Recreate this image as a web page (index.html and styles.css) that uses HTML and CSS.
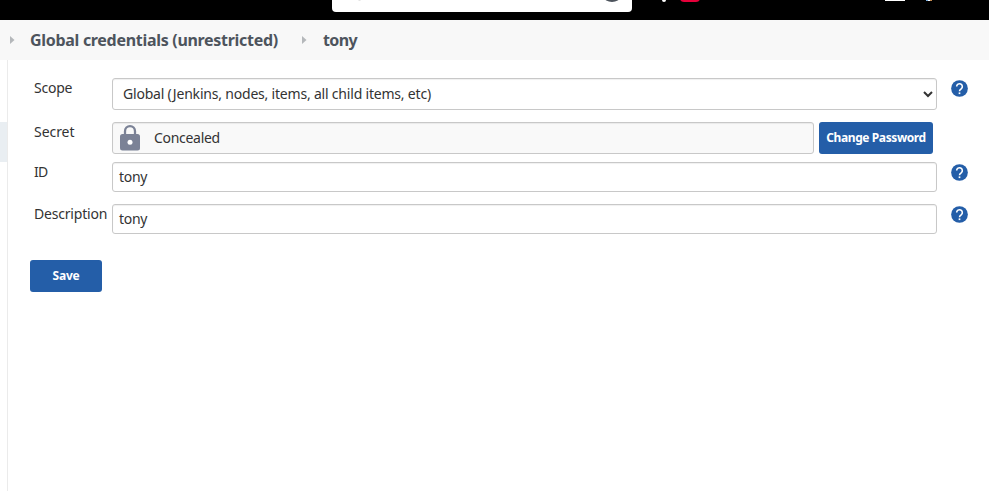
FILE: index.html
```html
<!DOCTYPE html>
<html lang="en">
<head>
<meta charset="utf-8">
<title>Update credentials</title>
<link rel="stylesheet" href="styles.css">
</head>
<body>
<svg class="defs" aria-hidden="true">
  <symbol id="help" viewBox="0 0 24 24"><circle cx="12" cy="12" r="11.8"/><path d="M8 9.2a4 4 0 1 1 6.7 3c-1.5 1.3-2.7 1.8-2.7 3.8" fill="none" stroke="#fff" stroke-width="2.2"/><path d="M10.8 17.5h2.4v2.4h-2.4z" fill="#fff"/></symbol>
  <symbol id="arrow" viewBox="0 0 5 8"><path d="M0 0l4.5 4L0 8z"/></symbol>
</svg>
<header class="topbar">
  <div class="search"><svg width="300" height="12"><path d="M26 0h3l-1 1h-1z" fill="#e4e4e4"/><ellipse cx="280" cy="-3" rx="8" ry="5" fill="#4d545d"/></svg></div>
  <svg class="actions" width="357" height="12"><circle cx="32" cy="0" r="2" fill="#fff"/><rect x="48" y="-10" width="20" height="12" rx="4" fill="#e6003a"/><path d="M253 0h20v1h-20z" fill="#fff"/><path d="M294 0h2v1h-2z" fill="#79aee0"/><path d="M296 0h2v1h-2z" fill="#fff"/><path d="M298 0h2v1h-2z" fill="#c58b51"/></svg>
</header>
<nav class="crumbs">
  <svg class="sep"><use href="#arrow"/></svg>
  <span class="crumb folder">Global credentials (unrestricted)</span>
  <svg class="sep"><use href="#arrow"/></svg>
  <span class="crumb item">tony</span>
</nav>
<div class="page">
  <aside class="side"><div class="current"></div></aside>
  <main class="form">
    <div class="row scope">
      <label class="label"><span class="t-scope">Scope</span></label>
      <div class="field select"><span class="t-option">Global (Jenkins, nodes, items, all child items, etc)</span><svg class="chevron" viewBox="0 0 10 7"><path d="M1 1l4 4 4-4"/></svg></div>
      <svg class="help"><use href="#help"/></svg>
    </div>
    <div class="row secret">
      <label class="label"><span class="t-secret">Secret</span></label>
      <div class="secret-box">
        <div class="field concealed"><svg class="lock" viewBox="0 0 20 26"><path d="M5 10V6.2a5 5 0 0 1 10 0V10" fill="none" stroke="#7b8296" stroke-width="2.3"/><rect y="9" width="20" height="16.5" rx="2.5" fill="#7b8296"/><circle cx="10" cy="17.3" r="2.5" fill="#fff"/></svg><span class="t-concealed">Concealed</span></div>
        <button class="button change"><span class="t-change">Change Password</span></button>
      </div>
    </div>
    <div class="row id">
      <label class="label"><span class="t-id">ID</span></label>
      <div class="field text"><span class="t-tony">tony</span></div>
      <svg class="help"><use href="#help"/></svg>
    </div>
    <div class="row description">
      <label class="label"><span class="t-desc">Description</span></label>
      <div class="field text"><span class="t-tony">tony</span></div>
      <svg class="help"><use href="#help"/></svg>
    </div>
    <button class="button save"><span class="t-save">Save</span></button>
  </main>
</div>
</body>
</html>
```
FILE: styles.css
```css
* { box-sizing: border-box; }
html, body { height: 100%; }
body { margin: 0; display: flex; flex-direction: column; overflow: hidden; background: #fff; color: #333; font-family: "Noto Sans", sans-serif; font-size: 14px; line-height: 20px; }
svg { display: block; flex: none; }
span { white-space: nowrap; }
.defs { display: none; }
.topbar { flex: none; height: 20px; display: flex; background: #000; padding-left: 332px; }
.search { width: 300px; height: 12px; background: #fff; border-radius: 0 0 4px 4px; }
.crumbs { flex: none; height: 40px; display: flex; align-items: center; background: #f8f8f8; padding-left: 10px; font-size: 16px; font-weight: 700; color: #4d545d; }
.sep { width: 5px; height: 8px; fill: #b5b8bb; }
.crumb { margin-left: 15px; }
.folder { width: 272px; letter-spacing: -0.3px; }
.item { margin-left: 16px; letter-spacing: -0.6px; }
.page { flex: 1; display: flex; }
.side { width: 8px; border-right: 1px solid #ebebeb; padding-top: 62px; }
.current { height: 40px; background: #e9eef2; }
.form { flex: 1; padding: 18px 0 0 22px; }
.row { display: grid; grid-template-columns: 78px 825px 32px; margin-left: 4px; }
.scope { margin-bottom: 12px; }
.secret { margin-bottom: 8px; }
.id { margin-bottom: 12px; }
.description { margin-bottom: 26px; }
.field { display: flex; align-items: center; border: 1px solid #c8c8c8; border-radius: 3px; box-shadow: inset 0 1px 1px #00000010; }
.select { height: 32px; padding: 0 3px 0 10px; justify-content: space-between; }
.text { height: 30px; padding-left: 6px; }
.chevron { width: 10px; height: 7px; fill: none; stroke: #333; stroke-width: 2; }
.help { width: 17px; height: 17px; margin: 1.5px 0 0 13.5px; fill: #245ea8; }
.secret-box { display: flex; gap: 5px; }
.concealed { width: 702px; height: 32px; padding-left: 7px; gap: 14px; background: #f9f9f9; }
.lock { width: 20px; height: 26px; }
.button { display: flex; justify-content: center; align-items: center; height: 32px; padding: 0; border: 0; border-radius: 3px; background: #245ea8; color: #fff; font: 700 12px/20px "Noto Sans", sans-serif; }
.change { width: 114px; }
.save { width: 72px; }
.t-scope { letter-spacing: -0.25px; }
.t-option { letter-spacing: -0.2px; }
.t-secret { letter-spacing: -0.05px; }
.t-concealed { letter-spacing: -0.3px; }
.t-id { letter-spacing: -0.8px; }
.t-tony { letter-spacing: -0.3px; }
.t-desc { letter-spacing: -0.2px; }
.t-change { letter-spacing: -0.4px; }
.t-save { letter-spacing: -0.2px; }
```
